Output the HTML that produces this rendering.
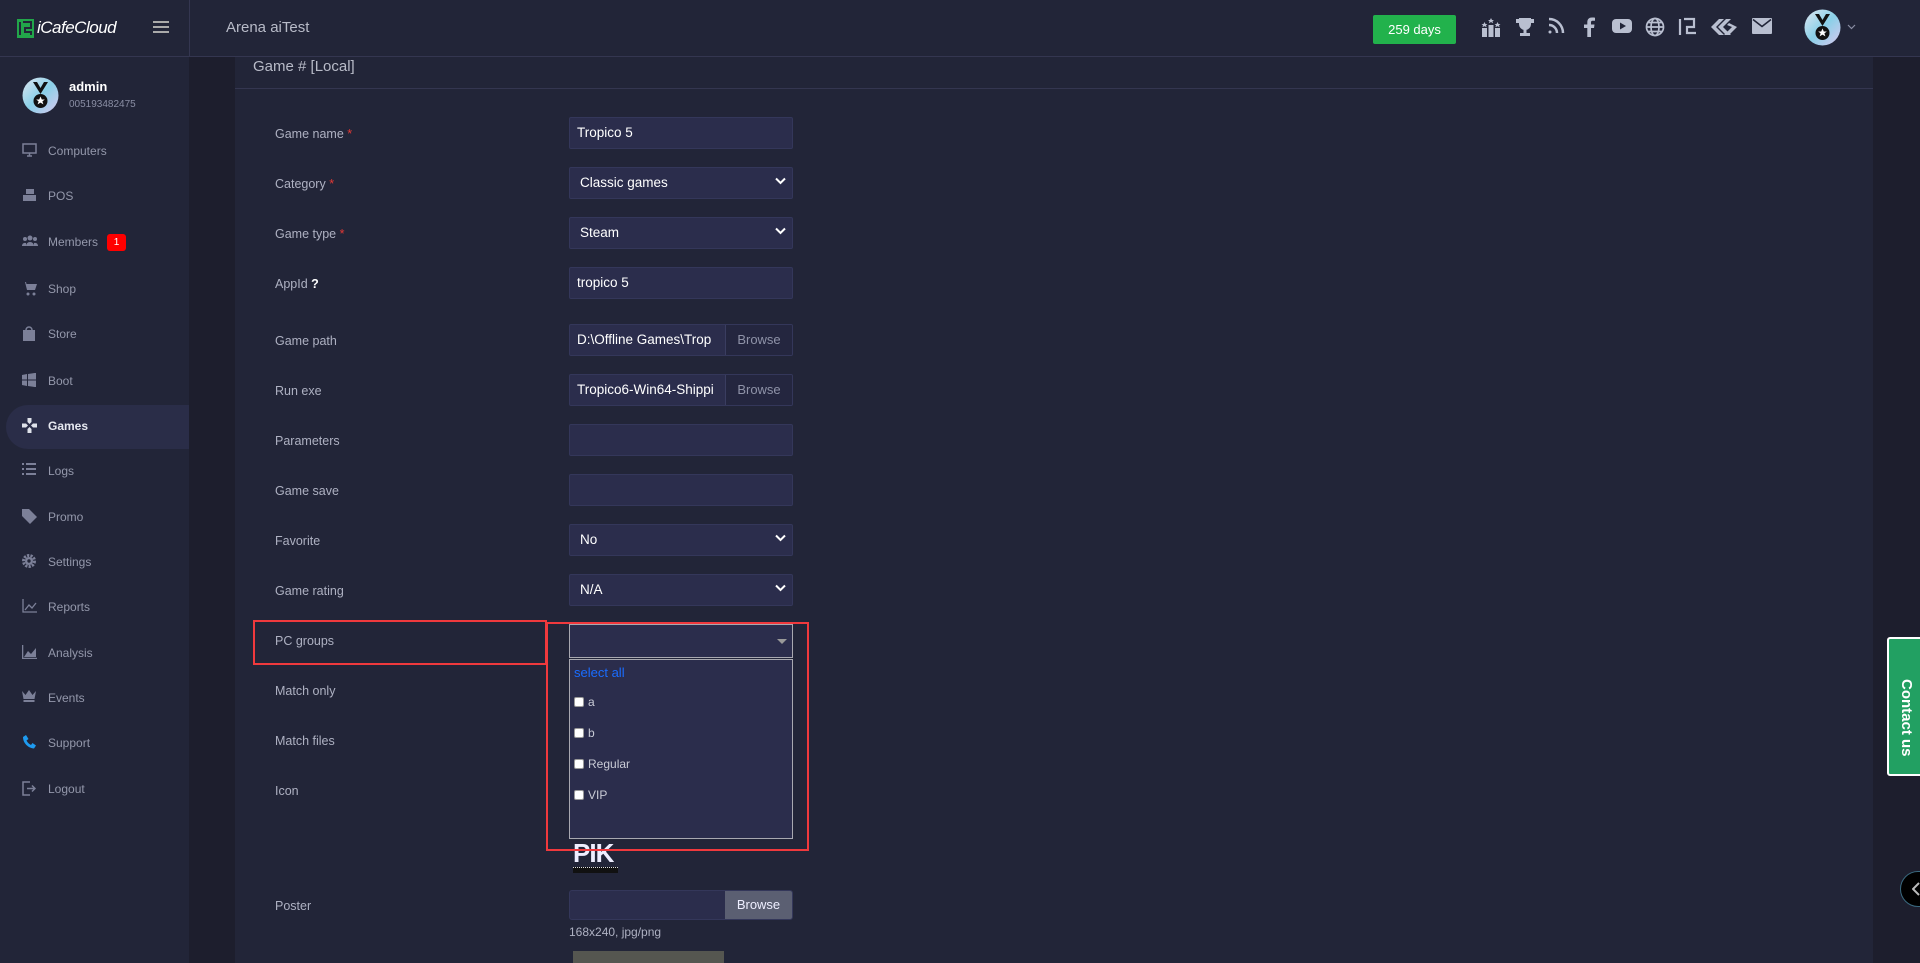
<!DOCTYPE html>
<html><head><meta charset="utf-8"><style>
*{box-sizing:border-box;margin:0;padding:0}
body{width:1920px;height:963px;overflow:hidden;background:#1d1e2d;font-family:"Liberation Sans",sans-serif;color:#c9cbd6;position:relative}
.abs{position:absolute}
#top{left:0;top:0;width:1920px;height:57px;background:#222538;border-bottom:1px solid #343650}
#side{left:0;top:57px;width:189px;height:906px;background:#222538}
#card{left:235px;top:57px;width:1638px;height:906px;background:#222538}
.nav{position:absolute;left:0;width:189px;height:40px;font-size:12px;color:#9498ab}
.nav svg{position:absolute;left:22px;top:12px}
.nav span{position:absolute;left:48px;top:13px}
.lbl{position:absolute;left:275px;font-size:12.5px;color:#aeb1c2}
.req{color:#e53935}
.inp{position:absolute;left:569px;width:224px;height:32px;background:#2b2d4c;border:1px solid #34375a;border-radius:2px;font-size:13.5px;color:#fff;padding:7px 7px}
.chev{position:absolute;right:6px;top:9px}
.br{position:absolute;right:0;top:0;width:67px;height:30px;border-left:1px solid #3a3d60;color:#8f93a8;font-size:13px;text-align:center;line-height:30px;background:#24263f}
.ico{position:absolute;top:17px}
.opt{position:absolute;left:574px;font-size:12px;color:#c9cbd6}
.opt i{display:inline-block;width:10px;height:10px;background:#fff;border:1px solid #999;border-radius:2px;margin-right:4px;vertical-align:-1px}
</style></head><body>
<div id="top" class="abs">
  <svg class="abs" style="left:17px;top:19px" width="17" height="19" viewBox="0 0 17 19"><rect x="0" y="0" width="17" height="19" fill="#22a64a"/><path d="M3 3v13M6 3h8v6H8v4h6v3" stroke="#222538" stroke-width="2" fill="none"/></svg>
  <div class="abs" style="left:37px;top:18px;font-size:17px;color:#fff;font-style:italic;letter-spacing:-0.5px">iCafeCloud</div>
  <div class="abs" style="left:153px;top:21px;width:16px;height:2px;background:#aaa;box-shadow:0 5px 0 #aaa,0 10px 0 #aaa"></div>
  <div class="abs" style="left:189px;top:0;width:1px;height:57px;background:#343650"></div>
  <div class="abs" style="left:226px;top:19px;font-size:15px;color:#b8bbc8">Arena aiTest</div>
  <div class="abs" style="left:1373px;top:15px;width:83px;height:29px;background:#22b24c;border-radius:2px;color:#fff;font-size:13px;text-align:center;line-height:29px">259 days</div>
  <svg class="ico" style="left:1481px" width="20" height="20" viewBox="0 0 20 20" fill="#b9bfd0"><rect x="1" y="11" width="5" height="9"/><rect x="7.5" y="8" width="5" height="12"/><rect x="14" y="11" width="5" height="9"/><path d="M3.5 5l1 2h2l-1.5 1.3.6 2-2.1-1.2-2.1 1.2.6-2L0.5 7h2zM10 1l1 2h2l-1.5 1.3.6 2L10 5 7.9 6.3l.6-2L7 3h2zM16.5 5l1 2h2l-1.5 1.3.6 2-2.1-1.2-2.1 1.2.6-2L13.5 7h2z"/></svg>
  <svg class="ico" style="left:1515px" width="20" height="20" viewBox="0 0 20 20" fill="#b9bfd0"><path d="M4 1h12v6a6 6 0 0 1-12 0zM1 2h3v4H1zM16 2h3v4h-3zM8.5 12h3v4h-3zM5 16h10v3H5z"/></svg>
  <svg class="ico" style="left:1547px" width="18" height="18" viewBox="0 0 18 18" fill="none" stroke="#b9bfd0" stroke-width="2.5"><circle cx="3" cy="15" r="1.5" fill="#b9bfd0" stroke="none"/><path d="M2 8a8 8 0 0 1 8 8M2 2a14 14 0 0 1 14 14"/></svg>
  <svg class="ico" style="left:1583px" width="12" height="20" viewBox="0 0 12 20" fill="#b9bfd0"><path d="M8 20V11h3l.5-3.5H8V5.5C8 4.5 8.3 3.8 9.8 3.8H12V.7C11.6.6 10.3.5 8.9.5 6 .5 4.3 2.2 4.3 5.2v2.3H1V11h3.3v9z"/></svg>
  <svg class="ico" style="left:1612px" width="20" height="18" viewBox="0 0 20 18"><rect x="0" y="2" width="20" height="14" rx="4" fill="#b9bfd0"/><path d="M8 5.5v7l6-3.5z" fill="#222538"/></svg>
  <svg class="ico" style="left:1645px" width="20" height="20" viewBox="0 0 20 20" fill="none" stroke="#b9bfd0" stroke-width="1.7"><circle cx="10" cy="10" r="8.5"/><ellipse cx="10" cy="10" rx="4" ry="8.5"/><path d="M1.5 10h17M3 5.5h14M3 14.5h14"/></svg>
  <svg class="ico" style="left:1678px" width="19" height="19" viewBox="0 0 19 19" fill="none" stroke="#b9bfd0" stroke-width="2.2"><path d="M2 2v16M6 2h10v8H9v6h9"/></svg>
  <svg class="ico" style="left:1711px;top:19px" width="27" height="16" viewBox="0 0 27 16" fill="#b9bfd0"><path d="M0 8l8-8h5L5 8l8 8H8zM7 8l8-8h5l-8 8 8 8h-5zM14 8l4-4 8 4-8 8h-5l8-8-5-2z"/></svg>
  <svg class="ico" style="left:1752px;top:18px" width="20" height="16" viewBox="0 0 20 16"><rect x="0" y="0" width="20" height="16" rx="1" fill="#b9bfd0"/><path d="M1 1.5l9 7 9-7" stroke="#222538" stroke-width="1.6" fill="none"/></svg>
  <svg class="abs" style="left:1804px;top:9px" width="37" height="37" viewBox="0 0 37 37"><defs><linearGradient id="g" x1="0" y1="0" x2="1" y2="1"><stop offset="0" stop-color="#e0e6f0"/><stop offset=".5" stop-color="#8ad0e8"/><stop offset="1" stop-color="#d9c8ef"/></linearGradient></defs><circle cx="18.5" cy="18.5" r="18" fill="url(#g)"/><path d="M11 5l7.5 12L26 5h-4l-3.5 6L15 5z" fill="#111"/><circle cx="18.5" cy="24" r="7" fill="#111"/><path d="M18.5 19.5l1.3 3h3l-2.4 1.9 1 3-2.9-1.8-2.9 1.8 1-3-2.4-1.9h3z" fill="#fff"/></svg>
  <svg class="abs" style="left:1847px;top:24px" width="9" height="6" viewBox="0 0 9 6" fill="none" stroke="#8a8ea4" stroke-width="1.2"><path d="M1 1l3.5 3.5L8 1"/></svg>
</div>

<div id="side" class="abs">
  <svg class="abs" style="left:22px;top:20px" width="37" height="37" viewBox="0 0 37 37"><circle cx="18.5" cy="18.5" r="18" fill="url(#g)"/><path d="M11 5l7.5 12L26 5h-4l-3.5 6L15 5z" fill="#111"/><circle cx="18.5" cy="24" r="7" fill="#111"/><path d="M18.5 19.5l1.3 3h3l-2.4 1.9 1 3-2.9-1.8-2.9 1.8 1-3-2.4-1.9h3z" fill="#fff"/></svg>
  <div class="abs" style="left:69px;top:22px;font-size:13px;color:#fff;font-weight:bold">admin</div>
  <div class="abs" style="left:69px;top:42px;font-size:10px;color:#8a8ea4">005193482475</div>
</div>
<div class="nav" style="top:131px"><svg width="15" height="14" viewBox="0 0 15 14" fill="none" stroke="#7c8098" stroke-width="1.5"><rect x="1" y="1" width="13" height="9"/><path d="M5 13h5M7.5 10v3"/></svg><span>Computers</span></div>
<div class="nav" style="top:176px"><svg width="15" height="14" viewBox="0 0 15 14" fill="#7c8098"><rect x="4" y="1" width="8" height="5"/><rect x="1" y="7" width="13" height="6"/></svg><span>POS</span></div>
<div class="nav" style="top:222px"><svg width="16" height="13" viewBox="0 0 16 13" fill="#7c8098"><circle cx="8" cy="4" r="2.5"/><circle cx="3" cy="5" r="2"/><circle cx="13" cy="5" r="2"/><path d="M4 12a4 4 0 0 1 8 0zM0 12a3 3 0 0 1 4-3v3zM16 12a3 3 0 0 0-4-3v3z"/></svg><span>Members</span><div class="abs" style="left:107px;top:12px;width:19px;height:17px;background:#f00;border-radius:3px;color:#fff;font-size:10px;text-align:center;line-height:17px">1</div></div>
<div class="nav" style="top:269px"><svg width="15" height="15" viewBox="0 0 15 15" fill="#7c8098"><path d="M0 1h3l2 8h8l2-6H4.5l-.5-2z"/><circle cx="6" cy="13" r="1.5"/><circle cx="12" cy="13" r="1.5"/></svg><span>Shop</span></div>
<div class="nav" style="top:314px"><svg width="14" height="15" viewBox="0 0 14 15" fill="#7c8098"><path d="M1 4h12v11H1z"/><path d="M4 4a3 3 0 0 1 6 0" stroke="#7c8098" fill="none" stroke-width="1.5"/></svg><span>Store</span></div>
<div class="nav" style="top:361px"><svg width="14" height="14" viewBox="0 0 14 14" fill="#7c8098"><path d="M0 2l5-1v5.5H0zM6 1l8-1.2v6.7H6zM0 7.5h5V13l-5-1zM6 7.5h8v6.7L6 13z"/></svg><span>Boot</span></div>
<div class="abs" style="left:6px;top:405px;width:183px;height:44px;background:#2a2d48;border-radius:22px 0 0 22px"></div>
<div class="nav" style="top:406px;color:#e6e8f0;font-weight:bold"><svg width="15" height="15" viewBox="0 0 15 15" fill="#dfe2ea"><path d="M5.5 0h4v4l-2 2-2-2zM5.5 15h4v-4l-2-2-2 2zM0 5.5v4h4l2-2-2-2zM15 5.5v4h-4l-2-2 2-2z"/></svg><span>Games</span></div>
<div class="nav" style="top:451px"><svg width="14" height="12" viewBox="0 0 14 12" fill="#7c8098"><path d="M0 0h2v2H0zM4 0h10v2H4zM0 5h2v2H0zM4 5h10v2H4zM0 10h2v2H0zM4 10h10v2H4z"/></svg><span>Logs</span></div>
<div class="nav" style="top:497px"><svg width="15" height="15" viewBox="0 0 15 15" fill="#7c8098"><path d="M0 0h7l8 8-7 7-8-8z"/></svg><span>Promo</span></div>
<div class="nav" style="top:542px"><svg width="14" height="14" viewBox="0 0 14 14"><circle cx="7" cy="7" r="5.5" fill="none" stroke="#7c8098" stroke-width="3" stroke-dasharray="2.2 1.2"/><circle cx="7" cy="7" r="4" fill="#7c8098"/><circle cx="7" cy="7" r="1.7" fill="#222538"/></svg><span>Settings</span></div>
<div class="nav" style="top:587px"><svg width="15" height="14" viewBox="0 0 15 14" fill="none" stroke="#7c8098" stroke-width="1.3"><path d="M1 0v13h14M3 11l4-5 3 3 4-5"/></svg><span>Reports</span></div>
<div class="nav" style="top:633px"><svg width="15" height="14" viewBox="0 0 15 14" fill="#7c8098"><path d="M0 0h1.3v12.7H15V14H0zM2 12l4-6 3 3 5-6v9z"/></svg><span>Analysis</span></div>
<div class="nav" style="top:678px"><svg width="14" height="12" viewBox="0 0 14 12" fill="#7c8098"><path d="M0 1l3.5 4L7 0l3.5 5L14 1l-1.5 8h-11zM1.5 10h11v2h-11z"/></svg><span>Events</span></div>
<div class="nav" style="top:723px"><svg width="14" height="14" viewBox="0 0 14 14" fill="#1e9bf0"><path d="M1 2l3-2 2.5 4-2 1.5c1 2 2.5 3.5 4.5 4.5L10.5 8 14 10.5l-2 3C6 13 1 8 1 2z"/></svg><span>Support</span></div>
<div class="nav" style="top:769px"><svg width="14" height="15" viewBox="0 0 14 15" fill="none" stroke="#7c8098" stroke-width="1.5"><path d="M8 1H1v13h7M5 7.5h8M10 4.5l3 3-3 3"/></svg><span>Logout</span></div>

<div id="card" class="abs"></div>
<div class="abs" style="left:253px;top:58px;font-size:15px;color:#b8bbc8">Game # [Local]</div>
<div class="abs" style="left:235px;top:88px;width:1638px;height:1px;background:#343650"></div>

<div class="lbl" style="top:127px">Game name <span class="req">*</span></div>
<div class="inp" style="top:117px">Tropico 5</div>
<div class="lbl" style="top:177px">Category <span class="req">*</span></div>
<div class="inp" style="top:167px;padding-left:10px">Classic games<svg class="chev" width="11" height="8" viewBox="0 0 11 8" fill="none" stroke="#fff" stroke-width="2"><path d="M1 1.5l4.5 4.5L10 1.5"/></svg></div>
<div class="lbl" style="top:227px">Game type <span class="req">*</span></div>
<div class="inp" style="top:217px;padding-left:10px">Steam<svg class="chev" width="11" height="8" viewBox="0 0 11 8" fill="none" stroke="#fff" stroke-width="2"><path d="M1 1.5l4.5 4.5L10 1.5"/></svg></div>
<div class="lbl" style="top:277px">AppId <b style="color:#fff">?</b></div>
<div class="inp" style="top:267px">tropico 5</div>
<div class="lbl" style="top:334px">Game path</div>
<div class="inp" style="top:324px;overflow:hidden;white-space:nowrap">D:\Offline Games\Trop<div class="br">Browse</div></div>
<div class="lbl" style="top:384px">Run exe</div>
<div class="inp" style="top:374px;overflow:hidden;white-space:nowrap">Tropico6-Win64-Shippi<div class="br">Browse</div></div>
<div class="lbl" style="top:434px">Parameters</div>
<div class="inp" style="top:424px"></div>
<div class="lbl" style="top:484px">Game save</div>
<div class="inp" style="top:474px"></div>
<div class="lbl" style="top:534px">Favorite</div>
<div class="inp" style="top:524px;padding-left:10px">No<svg class="chev" width="11" height="8" viewBox="0 0 11 8" fill="none" stroke="#fff" stroke-width="2"><path d="M1 1.5l4.5 4.5L10 1.5"/></svg></div>
<div class="lbl" style="top:584px">Game rating</div>
<div class="inp" style="top:574px;padding-left:10px">N/A<svg class="chev" width="11" height="8" viewBox="0 0 11 8" fill="none" stroke="#fff" stroke-width="2"><path d="M1 1.5l4.5 4.5L10 1.5"/></svg></div>

<div class="abs" style="left:253px;top:620px;width:294px;height:45px;border:2px solid #f0393d"></div>
<div class="lbl" style="top:634px">PC groups</div>
<div class="abs" style="left:569px;top:624px;width:224px;height:34px;background:#2b2d4c;border:1px solid #a8a8b0"><div class="abs" style="right:5px;top:14px;width:0;height:0;border-left:5px solid transparent;border-right:5px solid transparent;border-top:5px solid #999"></div></div>
<div class="abs" style="left:569px;top:659px;width:224px;height:180px;background:#2b2d4c;border:1px solid #a8a8b0"></div>
<div class="abs" style="left:574px;top:665px;font-size:13px;color:#1a6cff">select all</div>
<div class="opt" style="top:695px"><i></i>a</div>
<div class="opt" style="top:726px"><i></i>b</div>
<div class="opt" style="top:757px"><i></i>Regular</div>
<div class="opt" style="top:788px"><i></i>VIP</div>
<div class="lbl" style="top:684px">Match only</div>
<div class="lbl" style="top:734px">Match files</div>
<div class="lbl" style="top:784px">Icon</div>
<div class="abs" style="left:573px;top:840px;font-size:26px;font-weight:bold;color:#eef;line-height:26px;letter-spacing:-1px;width:45px;overflow:hidden">PIK</div>
<div class="abs" style="left:573px;top:867px;width:45px;height:6px;background:#111;border-top:1px dotted #ddd"></div>
<div class="abs" style="left:546px;top:622px;width:263px;height:229px;border:2px solid #f0393d"></div>

<div class="lbl" style="top:899px">Poster</div>
<div class="abs" style="left:569px;top:890px;width:224px;height:30px;background:#2b2d4c;border:1px solid #34375a;border-radius:3px;overflow:hidden"><div class="abs" style="right:0;top:0;width:67px;height:30px;background:#5b5f72;color:#eef;font-size:13px;text-align:center;line-height:28px">Browse</div></div>
<div class="abs" style="left:569px;top:925px;font-size:12px;color:#aeb1c2">168x240, jpg/png</div>
<div class="abs" style="left:573px;top:951px;width:151px;height:12px;background:#555650"></div>

<div class="abs" style="left:1887px;top:637px;width:36px;height:139px;background:#22a062;border:2px solid #fff;border-radius:3px 0 0 3px;writing-mode:vertical-rl;color:#fff;font-weight:bold;font-size:15px;text-align:center;line-height:30px;padding-top:22px">Contact us</div>
<div class="abs" style="left:1900px;top:871px;width:40px;height:36px;background:#000;border-radius:18px;border:1px solid #3a6a80"></div>
<svg class="abs" style="left:1912px;top:882px" width="8" height="14" viewBox="0 0 8 14" fill="none" stroke="#bbb" stroke-width="2"><path d="M7 1L1 7l6 6"/></svg>
</body></html>
